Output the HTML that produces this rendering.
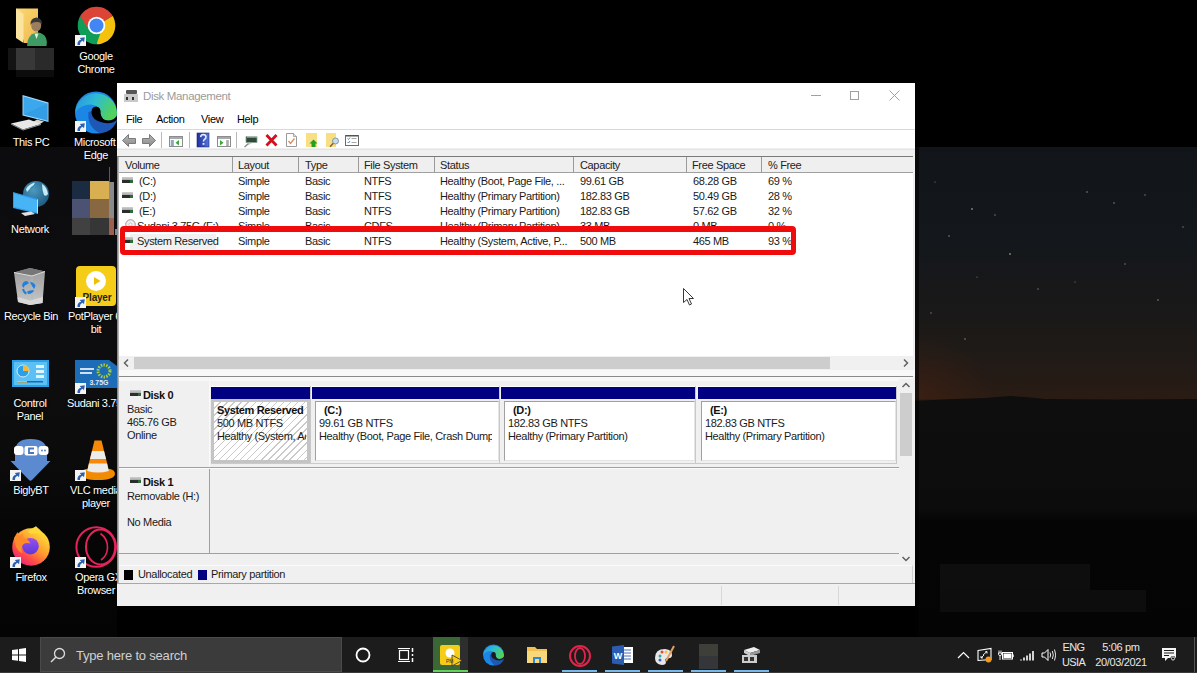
<!DOCTYPE html>
<html><head><meta charset="utf-8">
<style>
*{margin:0;padding:0;box-sizing:border-box}
html,body{width:1197px;height:673px;overflow:hidden;background:#000}
body{position:relative;font-family:"Liberation Sans",sans-serif;font-size:11px;letter-spacing:-0.35px;color:#000}
.a{position:absolute}
.t{position:absolute;white-space:nowrap;line-height:13px}
.lbl{position:absolute;color:#fff;text-align:center;width:70px;line-height:13px;white-space:nowrap;text-shadow:0 0 2px #000}
.sep{position:absolute;width:1px;background:#d0d0d0}
</style></head><body>

<!-- sky wallpaper -->
<!-- wallpaper -->
<div class="a" style="left:0;top:147px;width:117px;height:490px;background:linear-gradient(#0c0c0e 0,#0d0d0e 250px,#0b0a0a 330px,#060606 380px,#040404 490px)"></div>
<div class="a" style="left:915px;top:147px;width:282px;height:490px;background:linear-gradient(#11151a 0px,#14171b 100px,#181819 150px,#1e1a17 200px,#251b15 235px,#2a1c14 252px,#0e0e0e 253px,#0d0d0d 300px,#0c0c0c 362px,#050505 374px,#040404 490px)"></div>
<div class="a" style="left:915px;top:330px;width:80px;height:71px;background:radial-gradient(ellipse at 0% 100%,rgba(80,35,18,0.45),rgba(80,35,18,0) 70%)"></div>
<svg class="a" style="left:915px;top:147px" width="282" height="260" viewBox="0 0 282 260">
 <path d="M0 254L40 252L70 251L95 249L110 250L130 252L200 253L282 252V260H0Z" fill="#0e0e0e"/>
 <g fill="#8a8a70">
 <circle cx="34" cy="89" r="0.8"/><circle cx="57" cy="62" r="0.9"/><circle cx="80" cy="68" r="0.7"/><circle cx="95" cy="107" r="0.9"/><circle cx="172" cy="45" r="0.8"/><circle cx="199" cy="56" r="0.8"/><circle cx="243" cy="153" r="0.8"/><circle cx="230" cy="48" r="0.7"/>
 <circle cx="16" cy="166" r="0.7"/><circle cx="50" cy="192" r="0.8"/><circle cx="123" cy="142" r="0.7"/><circle cx="160" cy="135" r="0.6"/><circle cx="210" cy="117" r="0.7"/><circle cx="268" cy="80" r="0.7"/><circle cx="20" cy="35" r="0.6"/><circle cx="62" cy="130" r="0.6"/>
 </g>
</svg>
<div class="a" style="left:940px;top:564px;width:150px;height:26px;background:#0e0e0e"></div>
<div class="a" style="left:940px;top:590px;width:206px;height:22px;background:#0d0d0d"></div>

<div class="a" style="left:915px;top:147px;width:4px;height:490px;background:rgba(0,0,0,0.55)"></div>

<!-- ===== DESKTOP ICONS ===== -->
<!-- user folder -->
<svg class="a" style="left:10px;top:5px" width="40" height="42" viewBox="0 0 40 42">
  <defs><linearGradient id="fld" x1="0" y1="0" x2="1" y2="1"><stop offset="0" stop-color="#fbd870"/><stop offset="1" stop-color="#f0b850"/></linearGradient></defs>
  <path d="M6 3.5H28V38H14Z" fill="url(#fld)"/>
  <path d="M6 3.5L13.5 9V38L6 33Z" fill="#fbe3a0"/>
  <path d="M17 41Q17 30 26 27.5Q33 27 36 33Q37.5 37 36.5 41Z" fill="#3d9a62"/>
  <path d="M24.5 28.5L26.5 34L28.5 28.5Z" fill="#e8f0e8"/>
  <ellipse cx="26.2" cy="20.5" rx="5" ry="6" fill="#9c7e5e"/>
  <path d="M20.5 20Q20 13 26.5 12.5Q32.5 13 32 20Q31 16.5 26 17Q22 17 20.5 20Z" fill="#383838"/>
</svg>
<div class="a" style="left:8px;top:48px;width:46px;height:22px;background:linear-gradient(90deg,#141414 0,#141414 8px,#383838 8px,#383838 27px,#2a2a2a 27px,#2a2a2a 46px)"></div>
<div class="a" style="left:16px;top:70px;width:38px;height:7px;background:#0c0c0c"></div>
<!-- chrome -->
<svg class="a" style="left:77px;top:6px" width="39" height="39" viewBox="0 0 40 40">
  <path d="M20 20L3.3 10.35A19.3 19.3 0 0 1 36.7 10.35Z" fill="#db4437"/>
  <path d="M20 20L36.7 10.35A19.3 19.3 0 0 1 20 39.3Z" fill="#f4c20d"/>
  <path d="M20 20L20 39.3A19.3 19.3 0 0 1 3.3 10.35Z" fill="#0f9d58"/>
  <path d="M20 11L3.3 10.35L11 23Z" fill="#db4437"/>
  <path d="M27.8 24.5L36.7 10.35L29 16Z" fill="#f4c20d"/>
  <path d="M12.2 24.5L20 39.3L24 28Z" fill="#0f9d58"/>
  <circle cx="20" cy="20" r="9" fill="#fff"/>
  <circle cx="20" cy="20" r="7.2" fill="#4285f4"/>
</svg>
<div class="lbl" style="left:61px;top:50px">Google<br>Chrome</div>
<!-- this pc -->
<svg class="a" style="left:10px;top:94px" width="40" height="38" viewBox="0 0 40 38">
  <path d="M12.5 1L38.5 8.5V28L12.5 21.5Z" fill="#9dd8fb"/>
  <path d="M13.5 2.5L37.5 9.5V26.5L13.5 20.5Z" fill="#3ba8ee"/>
  <path d="M13.5 20.5L37.5 9.5V26.5Z" fill="#2e98e0" opacity="0.6"/>
  <path d="M27 25.5L34 27.5L29 30.5L22 28.5Z" fill="#d8d8d8"/>
  <path d="M1 29.5L19 25.5L31 30L13 35.5Z" fill="#e8e8e8"/>
  <path d="M13 35.5L31 30V31L13 36.5L1 30.5V29.5Z" fill="#9a9a9a"/>
</svg>
<div class="lbl" style="left:-4px;top:136px">This PC</div>
<!-- edge -->
<svg class="a" style="left:75px;top:91px" width="42" height="43" viewBox="0 0 42 43">
  <defs><linearGradient id="eg" x1="0" y1="0" x2="1" y2="0.4"><stop offset="0" stop-color="#2a8fe0"/><stop offset="0.5" stop-color="#2ebcd6"/><stop offset="1" stop-color="#52d15c"/></linearGradient></defs>
  <circle cx="21" cy="21.5" r="21" fill="#1b86e6"/>
  <path d="M13.5 21 Q12 36 25 42.3 Q36 42 41.5 31 L41.8 27.5 Q34 33 27 31.5 Q18 28.5 17 20Z" fill="#1e58b6"/>
  <path d="M0.3 20 A21 21 0 0 1 41.9 21 L41.8 24 Q40.5 29 33 29.5 Q26 29.5 25.5 23 Q24 14 15.5 13.5 Q6 13.5 0.6 21Z" fill="url(#eg)"/>
  <path d="M16.5 22 Q16 15.5 21.5 15.5 Q26 16 25.6 22.5 Q26.5 29 33 29.6 Q38.5 29.5 41.9 25 L41.6 29 Q37 33.5 28 31.8 Q17 29.5 16.5 22Z" fill="#000"/>
</svg>
<div class="lbl" style="left:61px;top:136px;text-align:left;padding-left:13px">Microsoft</div>
<div class="lbl" style="left:61px;top:149px">Edge</div>
<!-- network -->
<svg class="a" style="left:11px;top:178px" width="40" height="40" viewBox="0 0 40 40">
  <defs><radialGradient id="glb" cx="0.4" cy="0.35" r="0.7"><stop offset="0" stop-color="#4a9ac0"/><stop offset="1" stop-color="#1e5a80"/></radialGradient></defs>
  <circle cx="25" cy="16" r="13" fill="url(#glb)"/>
  <path d="M15 11Q18 6 24 4.5Q23 8 20 9Q18 12 16 14Z" fill="#c8ecf5"/>
  <path d="M31 6Q36 9 37 16Q35 19 33 17Q31 12 31 6Z" fill="#c8ecf5"/>
  <path d="M2 14L27 21V36L2 30Z" fill="#2e9ae8"/>
  <path d="M3 15.5L26 22V34.5L3 29Z" fill="#46b4f5"/>
  <path d="M26 22V34.5L27 36V21Z" fill="#cde"/>
  <path d="M10 35L20 33.5L24 36L14 38Z" fill="#e0e0e0"/>
</svg>
<div class="lbl" style="left:-5px;top:223px">Network</div>
<!-- pixelated icon -->
<div class="a" style="left:72px;top:181px;width:18px;height:18px;background:#1b2b42"></div>
<div class="a" style="left:90px;top:181px;width:19px;height:18px;background:#d8b052"></div>
<div class="a" style="left:72px;top:199px;width:18px;height:19px;background:#4b5272"></div>
<div class="a" style="left:90px;top:199px;width:19px;height:19px;background:#876840"></div>
<div class="a" style="left:72px;top:218px;width:18px;height:17px;background:#414141"></div>
<div class="a" style="left:90px;top:218px;width:19px;height:17px;background:#363636"></div>
<div class="a" style="left:109px;top:167px;width:1px;height:15px;background:#5a5a5a"></div>
<div class="a" style="left:109px;top:182px;width:5px;height:36px;background:#8a8a8a"></div>
<div class="a" style="left:115px;top:229px;width:2px;height:6px;background:#888"></div>
<div class="a" style="left:109px;top:218px;width:5px;height:17px;background:#9a6050"></div>
<!-- recycle bin -->
<svg class="a" style="left:13px;top:267px" width="35" height="39" viewBox="0 0 35 39">
  <defs><linearGradient id="rbg" x1="0" y1="0" x2="0" y2="1"><stop offset="0" stop-color="#9a9a9a"/><stop offset="1" stop-color="#c8c8c8"/></linearGradient></defs>
  <path d="M1 5.5L17 1L32 4.5L29.5 36L17 38L5 35Z" fill="url(#rbg)"/>
  <path d="M1 5.5L17 1L32 4.5L19 9Z" fill="#777"/>
  <path d="M1 5.5L19 9L32 4.5" stroke="#dcdcdc" stroke-width="1" fill="none"/>
  <path d="M19 9V38" stroke="#b8b8b8" stroke-width="0.8"/>
  <path d="M4.5 30L17 33.5L30 30L29.5 36L17 38L5 35Z" fill="#d8d8d8"/>
  <path d="M9 19Q9.5 14 14 14L16 16L13 18Q11 18 11 21Z" fill="#1e80e0"/>
  <path d="M17 15Q21 15 22.5 19L21 22L19 19Z" fill="#1e80e0"/>
  <path d="M21 23Q20 27 15 27L14 24.5L17 23.5Z" fill="#1e80e0"/>
  <path d="M10 22Q11 26 13.5 26.5" stroke="#1e80e0" stroke-width="2" fill="none"/>
</svg>
<div class="lbl" style="left:-4px;top:310px">Recycle Bin</div>
<!-- potplayer -->
<svg class="a" style="left:75px;top:265px" width="42" height="42" viewBox="0 0 42 42">
  <rect x="1" y="1" width="40" height="40" rx="4" fill="#f5cc18"/>
  <circle cx="21" cy="16" r="10" fill="#fff"/>
  <path d="M19 12V20L25.5 16Z" fill="#f0c000"/>
  <text x="22" y="36" font-family="Liberation Sans" font-weight="bold" font-size="10" fill="#1e1e1e" text-anchor="middle" letter-spacing="-0.2">Player</text>
</svg>
<div class="lbl" style="left:61px;top:310px;text-align:left;padding-left:7px">PotPlayer 6</div>
<div class="lbl" style="left:61px;top:323px">bit</div>
<!-- control panel -->
<svg class="a" style="left:12px;top:360px" width="37" height="28" viewBox="0 0 37 28">
  <rect x="0" y="0" width="37" height="27" fill="#2ba0e8"/>
  <rect x="2" y="2" width="33" height="23" fill="#5cc0f5"/>
  <circle cx="11" cy="11" r="6" fill="#2ba0e8" stroke="#cdefff" stroke-width="1"/>
  <path d="M11 11V5A6 6 0 0 1 17 11Z" fill="#f5b830"/>
  <rect x="24" y="5" width="8" height="3" fill="#dff4ff"/><rect x="24" y="10" width="8" height="3" fill="#dff4ff"/><rect x="24" y="15" width="8" height="3" fill="#dff4ff"/>
  <rect x="5" y="21" width="26" height="1.5" fill="#1a6ab0"/><rect x="5" y="21" width="10" height="1.5" fill="#f5b830"/>
</svg>
<div class="lbl" style="left:-5px;top:397px">Control<br>Panel</div>
<!-- sudani -->
<svg class="a" style="left:75px;top:360px" width="42" height="28" viewBox="0 0 42 28">
  <path d="M0 0H34L42 6V28H0Z" fill="#1c6cb8"/>
  <circle cx="29" cy="11" r="6" fill="none" stroke="#a8d030" stroke-width="3" stroke-dasharray="1.5 1.2"/>
  <rect x="5" y="8" width="14" height="2" fill="#cfe0f0"/><rect x="5" y="12" width="12" height="2" fill="#cfe0f0"/>
  <text x="24" y="25" font-family="Liberation Sans" font-weight="bold" font-size="7" fill="#e0eaf5" text-anchor="middle" letter-spacing="0">3.75G</text>
</svg>
<div class="lbl" style="left:61px;top:397px;text-align:left;padding-left:6px">Sudani 3.75</div>
<!-- biglybt -->
<svg class="a" style="left:10px;top:438px" width="41" height="44" viewBox="0 0 41 44">
  <path d="M5 14Q5 1 20.5 1Q37 1 37 14V23H40.5L22 42Q20.5 43.5 19 42L0.5 23H5Z" fill="#5b8ad0"/>
  <rect x="4" y="8" width="9.5" height="9" rx="3" fill="#fff"/>
  <rect x="14.5" y="8" width="13" height="9.5" rx="2" fill="#fff"/>
  <rect x="28.5" y="8" width="10" height="9" rx="3" fill="#fff"/>
  <path d="M24 10.5H19V15H24" stroke="#4a78c0" stroke-width="1.8" fill="none"/>
  <circle cx="32" cy="12.5" r="0.9" fill="#4a78c0"/><circle cx="35" cy="12.5" r="0.9" fill="#4a78c0"/>
</svg>
<div class="lbl" style="left:-4px;top:484px">BiglyBT</div>
<!-- vlc -->
<svg class="a" style="left:80px;top:439px" width="36" height="42" viewBox="0 0 36 42">
  <path d="M1 35Q1 31 6 30H30Q35 31 35 35Q34 41 18 41Q2 41 1 35Z" fill="#f08c00"/>
  <path d="M14.5 1.5H21.5L29.5 34Q18 37 6.5 34Z" fill="#f7880a"/>
  <path d="M12 12H24L26 20H10Z" fill="#ececec"/>
  <path d="M9 24.5H27L28.8 32Q18 35 7.2 32Z" fill="#ececec"/>
</svg>
<div class="lbl" style="left:61px;top:484px;text-align:left;padding-left:9px">VLC media</div>
<div class="lbl" style="left:61px;top:497px">player</div>
<!-- firefox -->
<svg class="a" style="left:11px;top:526px" width="40" height="40" viewBox="0 0 40 40">
  <defs>
   <linearGradient id="ffg" x1="0.85" y1="0.1" x2="0.2" y2="0.95"><stop offset="0" stop-color="#ffe23a"/><stop offset="0.45" stop-color="#ff9a2e"/><stop offset="0.75" stop-color="#ff4a4a"/><stop offset="1" stop-color="#e8207e"/></linearGradient>
   <linearGradient id="ffp" x1="0.5" y1="0" x2="0.5" y2="1"><stop offset="0" stop-color="#9a4ef0"/><stop offset="1" stop-color="#5a3ad8"/></linearGradient>
  </defs>
  <circle cx="20" cy="21" r="18.8" fill="url(#ffg)"/>
  <path d="M17 6Q21 2 25 0.3Q30 4 33 9Q28 6 20 8Z" fill="#ffd83a"/>
  <circle cx="19.5" cy="20.2" r="8.3" fill="url(#ffp)"/>
  <path d="M3 12L6.5 6L8 10.5L11.5 7.5L12.5 11.5Q17 12.5 19.5 17.5Q14 16 11.5 19Q9.5 23 11.5 27.5Q6 25 4.5 19Z" fill="#ff8c2a"/>
</svg>
<div class="lbl" style="left:-4px;top:571px">Firefox</div>
<!-- opera gx -->
<svg class="a" style="left:75px;top:526px" width="42" height="42" viewBox="0 0 42 42">
  <circle cx="21.2" cy="21" r="19.8" fill="none" stroke="#e6245c" stroke-width="2"/>
  <ellipse cx="25.6" cy="21" rx="14.6" ry="17.4" fill="none" stroke="#e6245c" stroke-width="2"/>
  <path d="M25.5 7.5Q33 13 32.5 22Q32 30 26 34" fill="none" stroke="#e6245c" stroke-width="1.6"/>
</svg>
<div class="lbl" style="left:61px;top:571px;text-align:left;padding-left:14px">Opera GX</div>
<div class="lbl" style="left:61px;top:584px">Browser</div>
<!-- shortcut overlays -->
<svg class="a" style="left:75px;top:35px" width="11" height="11" viewBox="0 0 11 11"><rect width="11" height="11" fill="#f4f4f4"/><path d="M2.5 10Q2 5.5 6.2 4.8L4.8 3L9.8 2.2L9 7.2L7.6 5.8Q4.8 6.8 5 10Z" fill="#2d5fb0"/></svg>
<svg class="a" style="left:75px;top:121px" width="11" height="11" viewBox="0 0 11 11"><rect width="11" height="11" fill="#f4f4f4"/><path d="M2.5 10Q2 5.5 6.2 4.8L4.8 3L9.8 2.2L9 7.2L7.6 5.8Q4.8 6.8 5 10Z" fill="#2d5fb0"/></svg>
<svg class="a" style="left:75px;top:297px" width="11" height="11" viewBox="0 0 11 11"><rect width="11" height="11" fill="#f4f4f4"/><path d="M2.5 10Q2 5.5 6.2 4.8L4.8 3L9.8 2.2L9 7.2L7.6 5.8Q4.8 6.8 5 10Z" fill="#2d5fb0"/></svg>
<svg class="a" style="left:75px;top:383px" width="11" height="11" viewBox="0 0 11 11"><rect width="11" height="11" fill="#f4f4f4"/><path d="M2.5 10Q2 5.5 6.2 4.8L4.8 3L9.8 2.2L9 7.2L7.6 5.8Q4.8 6.8 5 10Z" fill="#2d5fb0"/></svg>
<svg class="a" style="left:10px;top:470px" width="11" height="11" viewBox="0 0 11 11"><rect width="11" height="11" fill="#f4f4f4"/><path d="M2.5 10Q2 5.5 6.2 4.8L4.8 3L9.8 2.2L9 7.2L7.6 5.8Q4.8 6.8 5 10Z" fill="#2d5fb0"/></svg>
<svg class="a" style="left:75px;top:470px" width="11" height="11" viewBox="0 0 11 11"><rect width="11" height="11" fill="#f4f4f4"/><path d="M2.5 10Q2 5.5 6.2 4.8L4.8 3L9.8 2.2L9 7.2L7.6 5.8Q4.8 6.8 5 10Z" fill="#2d5fb0"/></svg>
<svg class="a" style="left:10px;top:557px" width="11" height="11" viewBox="0 0 11 11"><rect width="11" height="11" fill="#f4f4f4"/><path d="M2.5 10Q2 5.5 6.2 4.8L4.8 3L9.8 2.2L9 7.2L7.6 5.8Q4.8 6.8 5 10Z" fill="#2d5fb0"/></svg>
<svg class="a" style="left:75px;top:557px" width="11" height="11" viewBox="0 0 11 11"><rect width="11" height="11" fill="#f4f4f4"/><path d="M2.5 10Q2 5.5 6.2 4.8L4.8 3L9.8 2.2L9 7.2L7.6 5.8Q4.8 6.8 5 10Z" fill="#2d5fb0"/></svg>

<!-- ===== WINDOW ===== -->
<div class="a" style="left:117px;top:83px;width:798px;height:522px;background:#f0f0f0"></div>
<!-- title + menu + toolbar white -->
<div class="a" style="left:117px;top:83px;width:798px;height:65px;background:#fff"></div>
<svg class="a" style="left:124px;top:89px" width="15" height="14" viewBox="0 0 15 14">
  <rect x="2" y="1" width="11" height="4" rx="1" fill="#555"/>
  <rect x="0" y="5" width="14" height="8" fill="#c9c9c9"/>
  <rect x="2" y="8" width="2" height="3" fill="#333"/><rect x="8" y="8" width="2" height="3" fill="#333"/>
</svg>
<div class="t" style="left:143px;top:90px;color:#9b9b9b;font-size:11.5px">Disk Management</div>
<div class="a" style="left:811px;top:95px;width:10px;height:1px;background:#a0a0a0"></div>
<div class="a" style="left:850px;top:91px;width:9px;height:9px;border:1px solid #a0a0a0"></div>
<svg class="a" style="left:889px;top:90px" width="11" height="11" viewBox="0 0 11 11"><path d="M0.5 0.5L10.5 10.5M10.5 0.5L0.5 10.5" stroke="#a0a0a0" stroke-width="1"/></svg>
<div class="t" style="left:126px;top:113px">File</div>
<div class="t" style="left:156px;top:113px">Action</div>
<div class="t" style="left:201px;top:113px">View</div>
<div class="t" style="left:237px;top:113px">Help</div>
<div class="a" style="left:117px;top:129px;width:798px;height:1px;background:#d9d9d9"></div>
<!-- toolbar band -->
<div class="a" style="left:117px;top:149px;width:798px;height:1px;background:#e4e4e4"></div>
<div class="a" style="left:117px;top:150px;width:798px;height:6px;background:#f0f0f0"></div>
<div class="a" style="left:117px;top:156px;width:796px;height:1px;background:#7a7a7a"></div>
<!-- toolbar icons -->
<svg class="a" style="left:118px;top:130px" width="245" height="19" viewBox="0 0 245 19">
  <defs>
   <linearGradient id="arw" x1="0" y1="0" x2="0" y2="1"><stop offset="0" stop-color="#b8b8b8"/><stop offset="1" stop-color="#8a8a8a"/></linearGradient>
   <linearGradient id="hlp" x1="0" y1="0" x2="1" y2="0"><stop offset="0" stop-color="#1e2f9a"/><stop offset="1" stop-color="#5676d6"/></linearGradient>
  </defs>
  <!-- back -->
  <path d="M4.5 10.5L10.5 4.5V8.5H17.5V13.5H10.5V16.5Z" fill="url(#arw)" stroke="#707070" stroke-width="0.9" stroke-linejoin="round"/>
  <!-- forward -->
  <path d="M37.5 10.5L31.5 4.5V8.5H24.5V13.5H31.5V16.5Z" fill="url(#arw)" stroke="#707070" stroke-width="0.9" stroke-linejoin="round"/>
  <rect x="43" y="2" width="1" height="16" fill="#b8b8b8"/>
  <!-- console tree icon -->
  <rect x="51.5" y="6.5" width="13" height="10" fill="#fff" stroke="#8c8c8c"/>
  <rect x="52" y="7" width="12" height="2" fill="#a8a8b0"/>
  <rect x="53" y="10" width="3" height="6" fill="#a8c4dc"/>
  <path d="M52.5 11H55.5M52.5 13H55.5M52.5 15H55.5" stroke="#5a7a9a" stroke-width="0.7"/>
  <path d="M61 10V15.5L57.5 12.7Z" fill="#3aa83a"/>
  <rect x="71" y="2" width="1" height="16" fill="#b8b8b8"/>
  <!-- help -->
  <rect x="79" y="3" width="12" height="14" fill="url(#hlp)" stroke="#1a2680" stroke-width="0.6"/>
  <path d="M82.6 7.2Q83 4.6 85.4 4.6Q88 4.8 88 7Q88 8.6 86.4 9.5Q85.5 10.1 85.5 11.6" stroke="#e8f0ff" stroke-width="1.5" fill="none"/>
  <rect x="84.6" y="13" width="1.8" height="1.8" fill="#e8f0ff"/>
  <!-- action pane -->
  <rect x="99.5" y="6.5" width="13" height="10" fill="#fff" stroke="#8c8c8c"/>
  <rect x="100" y="7" width="12" height="2" fill="#a8a8b0"/>
  <path d="M102 10V15.5L105.5 12.7Z" fill="#3aa83a"/>
  <rect x="108" y="10" width="3" height="6" fill="#d0d0d0"/>
  <path d="M108.5 11H110.5M108.5 13H110.5M108.5 15H110.5" stroke="#666" stroke-width="0.7"/>
  <rect x="118" y="2" width="1" height="16" fill="#b8b8b8"/>
  <!-- drive connect -->
  <path d="M128 6.5H139V12.5H128Z" fill="#2f4a3a" stroke="#8aa090" stroke-width="0.8"/>
  <path d="M129 7H139" stroke="#c8d8c8" stroke-width="1"/>
  <path d="M131 12.5L134 13.5L130 15Z" fill="#bcd0dc"/>
  <path d="M126.5 17L130.5 13.5" stroke="#8a8a7a" stroke-width="1.4"/>
  <!-- red x -->
  <path d="M148.5 5L158.5 15.5M158.5 5L148.5 15.5" stroke="#d4101c" stroke-width="2.8"/>
  <!-- doc check -->
  <path d="M168.5 3.5H175.5L178.5 6.5V16.5H168.5Z" fill="#fff" stroke="#9a9a9a"/>
  <path d="M175.5 3.5V6.5H178.5" fill="#ddd" stroke="#9a9a9a" stroke-width="0.8"/>
  <path d="M170.5 11L172.5 13.5L176.5 8.5" stroke="#e08a50" stroke-width="1.3" fill="none"/>
  <!-- folder up -->
  <rect x="188" y="3" width="11" height="14" fill="#f9df84"/>
  <path d="M193.5 17V13.5H191.5L195.5 9.5L199.5 13.5H197.5V17Z" fill="#22a022"/>
  <!-- folder search -->
  <rect x="208" y="3" width="10" height="14" fill="#f9df84"/>
  <circle cx="217.5" cy="11" r="3" fill="#c4def0" stroke="#7a90a0" stroke-width="0.9"/>
  <path d="M215.3 13.2L212 16.8" stroke="#8a6030" stroke-width="1.5"/>
  <!-- properties list -->
  <rect x="227.5" y="5.5" width="13" height="10" fill="#fff" stroke="#6a6a6a"/>
  <rect x="228" y="5" width="12" height="1.5" fill="#555"/>
  <path d="M229.5 8.5L230.5 9.5L232 7.5M229.5 12L230.5 13L232 11" stroke="#4a7ab0" stroke-width="0.9" fill="none"/>
  <path d="M233.5 8.5H238.5M233.5 12.5H238.5" stroke="#9a9a9a" stroke-width="0.9"/>
</svg>

<!-- ===== LIST VIEW ===== -->
<div class="a" style="left:118px;top:157px;width:795px;height:15px;background:#efefef"></div>
<div class="a" style="left:118px;top:172px;width:795px;height:1px;background:#a0a0a0"></div>
<div class="a" style="left:118px;top:173px;width:795px;height:183px;background:#fff"></div>
<div class="sep" style="left:232px;top:157px;height:15px;background:#9a9a9a"></div>
<div class="sep" style="left:298px;top:157px;height:15px;background:#9a9a9a"></div>
<div class="sep" style="left:358px;top:157px;height:15px;background:#9a9a9a"></div>
<div class="sep" style="left:434px;top:157px;height:15px;background:#9a9a9a"></div>
<div class="sep" style="left:573px;top:157px;height:15px;background:#9a9a9a"></div>
<div class="sep" style="left:686px;top:157px;height:15px;background:#9a9a9a"></div>
<div class="sep" style="left:761px;top:157px;height:15px;background:#9a9a9a"></div>
<div class="t" style="left:125px;top:159px;color:#222">Volume</div>
<div class="t" style="left:238px;top:159px;color:#222">Layout</div>
<div class="t" style="left:305px;top:159px;color:#222">Type</div>
<div class="t" style="left:364px;top:159px;color:#222">File System</div>
<div class="t" style="left:440px;top:159px;color:#222">Status</div>
<div class="t" style="left:580px;top:159px;color:#222">Capacity</div>
<div class="t" style="left:692px;top:159px;color:#222">Free Space</div>
<div class="t" style="left:768px;top:159px;color:#222">% Free</div>

<div class="a" style="left:122px;top:177px;width:11px;height:3px;background:linear-gradient(#d0d0d0,#a8a8a8)"></div><div class="a" style="left:122px;top:180px;width:11px;height:3px;background:linear-gradient(90deg,#2a2f2c 0,#2a2f2c 8px,#2f6a3a 8px)"></div>
<div class="t" style="left:139px;top:175px;color:#1a1a1a">(C:)</div>
<div class="t" style="left:238px;top:175px;color:#1a1a1a">Simple</div>
<div class="t" style="left:305px;top:175px;color:#1a1a1a">Basic</div>
<div class="t" style="left:364px;top:175px;color:#1a1a1a">NTFS</div>
<div class="t" style="left:440px;top:175px;color:#1a1a1a">Healthy (Boot, Page File, ...</div>
<div class="t" style="left:580px;top:175px;color:#1a1a1a">99.61 GB</div>
<div class="t" style="left:693px;top:175px;color:#1a1a1a">68.28 GB</div>
<div class="t" style="left:768px;top:175px;color:#1a1a1a">69 %</div>
<div class="a" style="left:122px;top:192px;width:11px;height:3px;background:linear-gradient(#d0d0d0,#a8a8a8)"></div><div class="a" style="left:122px;top:195px;width:11px;height:3px;background:linear-gradient(90deg,#2a2f2c 0,#2a2f2c 8px,#2f6a3a 8px)"></div>
<div class="t" style="left:139px;top:190px;color:#1a1a1a">(D:)</div>
<div class="t" style="left:238px;top:190px;color:#1a1a1a">Simple</div>
<div class="t" style="left:305px;top:190px;color:#1a1a1a">Basic</div>
<div class="t" style="left:364px;top:190px;color:#1a1a1a">NTFS</div>
<div class="t" style="left:440px;top:190px;color:#1a1a1a">Healthy (Primary Partition)</div>
<div class="t" style="left:580px;top:190px;color:#1a1a1a">182.83 GB</div>
<div class="t" style="left:693px;top:190px;color:#1a1a1a">50.49 GB</div>
<div class="t" style="left:768px;top:190px;color:#1a1a1a">28 %</div>
<div class="a" style="left:122px;top:207px;width:11px;height:3px;background:linear-gradient(#d0d0d0,#a8a8a8)"></div><div class="a" style="left:122px;top:210px;width:11px;height:3px;background:linear-gradient(90deg,#2a2f2c 0,#2a2f2c 8px,#2f6a3a 8px)"></div>
<div class="t" style="left:139px;top:205px;color:#1a1a1a">(E:)</div>
<div class="t" style="left:238px;top:205px;color:#1a1a1a">Simple</div>
<div class="t" style="left:305px;top:205px;color:#1a1a1a">Basic</div>
<div class="t" style="left:364px;top:205px;color:#1a1a1a">NTFS</div>
<div class="t" style="left:440px;top:205px;color:#1a1a1a">Healthy (Primary Partition)</div>
<div class="t" style="left:580px;top:205px;color:#1a1a1a">182.83 GB</div>
<div class="t" style="left:693px;top:205px;color:#1a1a1a">57.62 GB</div>
<div class="t" style="left:768px;top:205px;color:#1a1a1a">32 %</div>
<svg class="a" style="left:125px;top:219px" width="11" height="11" viewBox="0 0 11 11"><circle cx="5.5" cy="5.5" r="4.8" fill="#eee" stroke="#999"/><circle cx="5.5" cy="5.5" r="1.5" fill="#fff" stroke="#aaa" stroke-width="0.6"/></svg>
<div class="t" style="left:137px;top:220px;color:#1a1a1a">Sudani 3.75G (F:)</div>
<div class="t" style="left:238px;top:220px;color:#1a1a1a">Simple</div>
<div class="t" style="left:305px;top:220px;color:#1a1a1a">Basic</div>
<div class="t" style="left:364px;top:220px;color:#1a1a1a">CDFS</div>
<div class="t" style="left:440px;top:220px;color:#1a1a1a">Healthy (Primary Partition)</div>
<div class="t" style="left:580px;top:220px;color:#1a1a1a">33 MB</div>
<div class="t" style="left:693px;top:220px;color:#1a1a1a">0 MB</div>
<div class="t" style="left:768px;top:220px;color:#1a1a1a">0 %</div>
<div class="a" style="left:130px;top:234px;width:86px;height:15px;background:#f1f1f1"></div>
<div class="a" style="left:122px;top:237px;width:11px;height:3px;background:linear-gradient(#d0d0d0,#a8a8a8)"></div><div class="a" style="left:122px;top:240px;width:11px;height:3px;background:linear-gradient(90deg,#2a2f2c 0,#2a2f2c 8px,#2f6a3a 8px)"></div>
<div class="t" style="left:137px;top:235px;color:#1a1a1a">System Reserved</div>
<div class="t" style="left:238px;top:235px;color:#1a1a1a">Simple</div>
<div class="t" style="left:305px;top:235px;color:#1a1a1a">Basic</div>
<div class="t" style="left:364px;top:235px;color:#1a1a1a">NTFS</div>
<div class="t" style="left:440px;top:235px;color:#1a1a1a">Healthy (System, Active, P...</div>
<div class="t" style="left:580px;top:235px;color:#1a1a1a">500 MB</div>
<div class="t" style="left:693px;top:235px;color:#1a1a1a">465 MB</div>
<div class="t" style="left:768px;top:235px;color:#1a1a1a">93 %</div>
<div class="a" style="left:120px;top:226px;width:676px;height:29px;border:5px solid #f00c0c;border-top-width:6px;border-radius:4px"></div>
<!-- h scrollbar -->
<div class="a" style="left:118px;top:356px;width:795px;height:14px;background:#f0f0f0"></div>
<div class="a" style="left:134px;top:357px;width:696px;height:12px;background:#cdcdcd"></div>
<svg class="a" style="left:122px;top:358px" width="8" height="10" viewBox="0 0 8 10"><path d="M6 1.5L2.5 5L6 8.5" stroke="#606060" stroke-width="1.5" fill="none"/></svg>
<svg class="a" style="left:902px;top:358px" width="8" height="10" viewBox="0 0 8 10"><path d="M2 1.5L5.5 5L2 8.5" stroke="#606060" stroke-width="1.5" fill="none"/></svg>
<!-- splitter -->
<div class="a" style="left:117px;top:370px;width:798px;height:6px;background:#f8f8f8"></div>
<div class="a" style="left:118px;top:376px;width:795px;height:1px;background:#8a8a8a"></div>
<div class="a" style="left:118px;top:377px;width:795px;height:4px;background:#f7f7f7"></div>
<!-- graphical view -->
<div class="a" style="left:118px;top:381px;width:795px;height:184px;background:#f0f0f0"></div>
<!-- v scrollbar -->
<div class="a" style="left:899px;top:379px;width:14px;height:186px;background:#f0f0f0"></div>
<div class="a" style="left:900px;top:393px;width:12px;height:63px;background:#cdcdcd"></div>
<svg class="a" style="left:901px;top:381px" width="10" height="8" viewBox="0 0 10 8"><path d="M1.5 6L5 2.5L8.5 6" stroke="#606060" stroke-width="1.5" fill="none"/></svg>
<svg class="a" style="left:901px;top:555px" width="10" height="8" viewBox="0 0 10 8"><path d="M1.5 2L5 5.5L8.5 2" stroke="#606060" stroke-width="1.5" fill="none"/></svg>

<!-- disk 0 label panel -->
<div class="a" style="left:118px;top:381px;width:92px;height:86px;background:#f0f0f0;border-right:1px solid #fafafa"></div>
<div class="a" style="left:130px;top:390px;width:11px;height:3px;background:linear-gradient(#d0d0d0,#a8a8a8)"></div>
<div class="a" style="left:130px;top:393px;width:11px;height:3px;background:linear-gradient(90deg,#2a2f2c 0,#2a2f2c 8px,#2f6a3a 8px)"></div>
<div class="t" style="left:143px;top:389px;font-weight:bold;color:#111">Disk 0</div>
<div class="t" style="left:127px;top:403px;color:#1a1a1a">Basic</div>
<div class="t" style="left:127px;top:416px;color:#1a1a1a">465.76 GB</div>
<div class="t" style="left:127px;top:429px;color:#1a1a1a">Online</div>

<!-- disk 0 partitions area -->

<!-- partitions -->
<div class="a" style="left:211px;top:386px;width:686px;height:1px;background:#fff"></div>
<div class="a" style="left:211px;top:387px;width:99px;height:12px;background:#000080"></div>
<div class="a" style="left:310px;top:386px;width:1px;height:78px;background:#c8c8c8"></div>
<div class="a" style="left:312px;top:387px;width:187px;height:12px;background:#000080"></div>
<div class="a" style="left:499px;top:386px;width:1px;height:78px;background:#c8c8c8"></div>
<div class="a" style="left:501px;top:387px;width:194px;height:12px;background:#000080"></div>
<div class="a" style="left:695px;top:386px;width:1px;height:78px;background:#c8c8c8"></div>
<div class="a" style="left:698px;top:387px;width:198px;height:12px;background:#000080"></div>
<div class="a" style="left:896px;top:386px;width:1px;height:78px;background:#c8c8c8"></div>
<div class="a" style="left:211px;top:463px;width:686px;height:1px;background:#cacaca"></div>
<div class="a" style="left:211px;top:399px;width:99px;height:64px;background:#c4c4c4"></div>
<div class="a" style="left:214px;top:402px;width:93px;height:58px;background-color:#fff;background-image:repeating-linear-gradient(135deg,#fff 0px,#fff 4px,#cacaca 4px,#cacaca 5px)"></div>
<div class="t" style="left:217px;top:404px;font-weight:bold;color:#111">System Reserved</div>
<div class="t" style="left:217px;top:417px;color:#1a1a1a">500 MB NTFS</div>
<div class="t" style="left:217px;top:430px;color:#1a1a1a;width:89px;overflow:hidden">Healthy (System, Active, Primary</div>
<div class="a" style="left:315px;top:401px;width:184px;height:60px;background:#fff;border-top:1px solid #a0a0a0;border-left:1px solid #a0a0a0;border-right:1px solid #e4e4e4;border-bottom:1px solid #e4e4e4"></div>
<div class="t" style="left:324px;top:404px;font-weight:bold;color:#111">(C:)</div>
<div class="t" style="left:319px;top:417px;color:#1a1a1a">99.61 GB NTFS</div>
<div class="t" style="left:319px;top:430px;color:#1a1a1a;width:173px;overflow:hidden">Healthy (Boot, Page File, Crash Dump, Primary Partition)</div>
<div class="a" style="left:504px;top:401px;width:191px;height:60px;background:#fff;border-top:1px solid #a0a0a0;border-left:1px solid #a0a0a0;border-right:1px solid #e4e4e4;border-bottom:1px solid #e4e4e4"></div>
<div class="t" style="left:513px;top:404px;font-weight:bold;color:#111">(D:)</div>
<div class="t" style="left:508px;top:417px;color:#1a1a1a">182.83 GB NTFS</div>
<div class="t" style="left:508px;top:430px;color:#1a1a1a;width:185px;overflow:hidden">Healthy (Primary Partition)</div>
<div class="a" style="left:701px;top:401px;width:195px;height:60px;background:#fff;border-top:1px solid #a0a0a0;border-left:1px solid #a0a0a0;border-right:1px solid #e4e4e4;border-bottom:1px solid #e4e4e4"></div>
<div class="t" style="left:710px;top:404px;font-weight:bold;color:#111">(E:)</div>
<div class="t" style="left:705px;top:417px;color:#1a1a1a">182.83 GB NTFS</div>
<div class="t" style="left:705px;top:430px;color:#1a1a1a;width:189px;overflow:hidden">Healthy (Primary Partition)</div>
<div class="a" style="left:118px;top:467px;width:781px;height:1px;background:#a0a0a0"></div>
<div class="a" style="left:118px;top:468px;width:781px;height:1px;background:#fafafa"></div>
<!-- disk 1 -->
<div class="a" style="left:118px;top:469px;width:92px;height:85px;background:#f0f0f0;border-right:1px solid #a0a0a0;border-bottom:1px solid #a0a0a0"></div>
<div class="a" style="left:130px;top:477px;width:11px;height:3px;background:linear-gradient(#d0d0d0,#a8a8a8)"></div>
<div class="a" style="left:130px;top:480px;width:11px;height:3px;background:linear-gradient(90deg,#2a2f2c 0,#2a2f2c 8px,#2f6a3a 8px)"></div>
<div class="t" style="left:143px;top:476px;font-weight:bold;color:#111">Disk 1</div>
<div class="t" style="left:127px;top:490px;color:#1a1a1a">Removable (H:)</div>
<div class="t" style="left:127px;top:516px;color:#1a1a1a">No Media</div>
<div class="a" style="left:210px;top:469px;width:689px;height:85px;background:#f0f0f0;border-bottom:1px solid #a0a0a0"></div>

<!-- legend -->
<div class="a" style="left:118px;top:565px;width:795px;height:18px;background:#f0f0f0;border-top:1px solid #fafafa;border-right:1px solid #d0d0d0"></div>
<div class="a" style="left:124px;top:570px;width:9px;height:10px;background:#000"></div>
<div class="t" style="left:138px;top:568px;color:#1a1a1a">Unallocated</div>
<div class="a" style="left:198px;top:570px;width:9px;height:10px;background:#000080"></div>
<div class="t" style="left:211px;top:568px;color:#1a1a1a">Primary partition</div>
<!-- status bar -->
<div class="a" style="left:117px;top:583px;width:798px;height:1px;background:#a8a8a8"></div>
<div class="a" style="left:117px;top:584px;width:798px;height:22px;background:#f0f0f0"></div>
<div class="a" style="left:721px;top:586px;width:1px;height:19px;background:#d8d8d8"></div>
<div class="a" style="left:838px;top:586px;width:1px;height:19px;background:#d8d8d8"></div>

<div class="a" style="left:117px;top:156px;width:1px;height:427px;background:#8a8a8a"></div>
<div class="a" style="left:118px;top:157px;width:1px;height:426px;background:#b4b4b4"></div>

<!-- ===== TASKBAR ===== -->
<div class="a" style="left:0;top:637px;width:1197px;height:36px;background:#1c1c1c"></div>
<div class="a" style="left:0;top:672px;width:1197px;height:1px;background:#3a3a3a"></div>
<svg class="a" style="left:12px;top:648px" width="14" height="14" viewBox="0 0 14 14"><path d="M0 2L6 1.2V6.6H0ZM7 1L14 0V6.6H7ZM0 7.4H6V12.8L0 12ZM7 7.4H14V14L7 13Z" fill="#fff"/></svg>
<div class="a" style="left:40px;top:637px;width:302px;height:35px;background:#3b3b3b;border:1px solid #4a4a4a"></div>
<svg class="a" style="left:50px;top:647px" width="16" height="16" viewBox="0 0 16 16"><circle cx="9.5" cy="6.5" r="5" fill="none" stroke="#ddd" stroke-width="1.3"/><path d="M6 10L1 15" stroke="#ddd" stroke-width="1.5"/></svg>
<div class="t" style="left:76px;top:648px;color:#d0d0d0;font-size:13px;letter-spacing:-0.2px;line-height:16px">Type here to search</div>
<!-- cortana -->
<svg class="a" style="left:355px;top:647px" width="16" height="16" viewBox="0 0 16 16"><circle cx="8" cy="8" r="6.5" fill="none" stroke="#fff" stroke-width="1.8"/></svg>
<!-- task view -->
<svg class="a" style="left:397px;top:647px" width="18" height="16" viewBox="0 0 18 16"><rect x="2.5" y="3.5" width="9" height="9" fill="none" stroke="#fff" stroke-width="1.2"/><path d="M1 1.5H13M1 14.5H13" stroke="#fff" stroke-width="1.2"/><path d="M15.5 1V5M15.5 7V9M15.5 11V15" stroke="#fff" stroke-width="1.5"/></svg>
<!-- potplayer active -->
<div class="a" style="left:433px;top:637px;width:27px;height:35px;background:#3b6636"></div>
<div class="a" style="left:460px;top:637px;width:8px;height:35px;background:#2e2e2e"></div>
<div class="a" style="left:433px;top:670px;width:35px;height:2px;background:#5fd35a"></div>
<svg class="a" style="left:440px;top:645px" width="24" height="22" viewBox="0 0 24 22"><rect x="0" y="0" width="20" height="20" rx="2" fill="#f5cc18"/><circle cx="10" cy="8" r="4.5" fill="#fff"/><path d="M12 10V21L22 15.5Z" fill="#f5cc18" stroke="#333" stroke-width="0.8"/><text x="6" y="18" font-family="Liberation Sans" font-size="5" fill="#333" letter-spacing="0">PM</text></svg>
<!-- edge -->
<svg class="a" style="left:483px;top:644px" width="21" height="22" viewBox="0 0 42 43">
  <defs><linearGradient id="eg2" x1="0" y1="0" x2="1" y2="0.4"><stop offset="0" stop-color="#2a8fe0"/><stop offset="0.5" stop-color="#2ebcd6"/><stop offset="1" stop-color="#52d15c"/></linearGradient></defs>
  <circle cx="21" cy="21.5" r="21" fill="#1b86e6"/>
  <path d="M13.5 21 Q12 36 25 42.3 Q36 42 41.5 31 L41.8 27.5 Q34 33 27 31.5 Q18 28.5 17 20Z" fill="#1e58b6"/>
  <path d="M0.3 20 A21 21 0 0 1 41.9 21 L41.8 24 Q40.5 29 33 29.5 Q26 29.5 25.5 23 Q24 14 15.5 13.5 Q6 13.5 0.6 21Z" fill="url(#eg2)"/>
  <path d="M16.5 22 Q16 15.5 21.5 15.5 Q26 16 25.6 22.5 Q26.5 29 33 29.6 Q38.5 29.5 41.9 25 L41.6 29 Q37 33.5 28 31.8 Q17 29.5 16.5 22Z" fill="#1c1c1c"/>
</svg>
<!-- explorer -->
<svg class="a" style="left:527px;top:646px" width="20" height="18" viewBox="0 0 20 18"><path d="M0 1H8L10 3H20V17H0Z" fill="#f0c050"/><rect x="0" y="5" width="20" height="12" fill="#f8d878"/><path d="M6 17V11H14V17H12V13H8V17Z" fill="#2a8ad8"/></svg>
<!-- opera -->
<svg class="a" style="left:569px;top:645px" width="22" height="22" viewBox="0 0 22 22"><ellipse cx="11" cy="11" rx="10" ry="10" fill="none" stroke="#e0244a" stroke-width="2"/><ellipse cx="11" cy="11" rx="5" ry="8" fill="none" stroke="#e0244a" stroke-width="1.8"/></svg>
<!-- word -->
<svg class="a" style="left:612px;top:645px" width="22" height="20" viewBox="0 0 22 20"><rect x="8" y="2" width="13" height="16" fill="#fff"/><path d="M10 5H19M10 8H19M10 11H19M10 14H19" stroke="#4a70b8" stroke-width="1"/><path d="M0 1.5L12 0V20L0 18.5Z" fill="#2b5cb0"/><text x="6" y="13.5" font-family="Liberation Sans" font-weight="bold" font-size="9" fill="#fff" text-anchor="middle" letter-spacing="0">W</text></svg>
<!-- paint -->
<svg class="a" style="left:654px;top:645px" width="22" height="22" viewBox="0 0 22 22"><path d="M1 13Q1 4 11 4Q19 5 18 11Q17 14 13 13Q10 14 12 17Q12 20 8 20Q1 19 1 13Z" fill="#e8e8e8"/><circle cx="6" cy="11" r="1.5" fill="#3a9"/><circle cx="8" cy="7" r="1.5" fill="#e44"/><circle cx="12" cy="7" r="1.5" fill="#fb3"/><circle cx="6" cy="15" r="1.5" fill="#36c"/><path d="M20 1L12 16" stroke="#e0a060" stroke-width="2"/></svg>
<!-- blurred -->
<div class="a" style="left:699px;top:644px;width:19px;height:12px;background:#3e3f38"></div>
<div class="a" style="left:699px;top:656px;width:19px;height:13px;background:#35363a"></div>
<!-- disk mgmt -->
<svg class="a" style="left:741px;top:646px" width="20" height="18" viewBox="0 0 20 18"><path d="M3 4L13 1L19 4L9 7Z" fill="#eee"/><path d="M3 4L9 7V10L3 7Z" fill="#ccc"/><path d="M9 7L19 4V7L9 10Z" fill="#999"/><rect x="1" y="9" width="15" height="8" fill="#ccc"/><rect x="3" y="11" width="4" height="4" fill="#333"/><rect x="9" y="11" width="4" height="4" fill="#333"/></svg>
<!-- underlines -->
<div class="a" style="left:562px;top:670px;width:35px;height:2px;background:#76b9ed"></div>
<div class="a" style="left:605px;top:670px;width:35px;height:2px;background:#76b9ed"></div>
<div class="a" style="left:648px;top:670px;width:35px;height:2px;background:#76b9ed"></div>
<div class="a" style="left:691px;top:670px;width:35px;height:2px;background:#76b9ed"></div>
<div class="a" style="left:734px;top:670px;width:35px;height:2px;background:#76b9ed"></div>
<!-- tray -->
<svg class="a" style="left:957px;top:651px" width="13" height="8" viewBox="0 0 13 8"><path d="M1 7L6.5 1.5L12 7" stroke="#fff" stroke-width="1.2" fill="none"/></svg>
<svg class="a" style="left:976px;top:647px" width="17" height="16" viewBox="0 0 17 16"><path d="M2 3.5L15 1.5V12.5L2 13.5Z" fill="none" stroke="#fff" stroke-width="1.1"/><path d="M9 5L11 4.5V6.5M11 4.5L7 8M5 11L5 9M5 11L7 10.8M5 11L8 8" stroke="#fff" stroke-width="0.9" fill="none"/><circle cx="12.5" cy="12.5" r="3" fill="#f59a1a"/></svg>
<svg class="a" style="left:998px;top:650px" width="16" height="11" viewBox="0 0 16 11"><rect x="4.5" y="2.5" width="10" height="6.5" fill="none" stroke="#fff" stroke-width="1"/><rect x="5.5" y="3.5" width="8" height="4.5" fill="#fff"/><rect x="14.5" y="4.5" width="1.2" height="2.5" fill="#fff"/><path d="M1 0.5V3M3 0.5V3M0.5 3H3.5V4.5Q3.5 5.5 2 5.5Q0.5 5.5 0.5 4.5ZM2 5.5V10" stroke="#fff" stroke-width="0.9" fill="none"/></svg>
<svg class="a" style="left:1020px;top:650px" width="14" height="11" viewBox="0 0 14 11"><path d="M1 10.5V9.5M4 10.5V7.5M7 10.5V5.5M10 10.5V3.5M13 10.5V1" stroke="#fff" stroke-width="1.6"/></svg>
<svg class="a" style="left:1041px;top:648px" width="15" height="14" viewBox="0 0 15 14"><path d="M1 5H3.5L7 1.5V12.5L3.5 9H1Z" fill="none" stroke="#fff" stroke-width="1"/><path d="M9 4.5Q10.3 7 9 9.5M11.3 3Q13.3 7 11.3 11M13.5 1.5Q16 7 13.5 12.5" stroke="#fff" stroke-width="0.9" fill="none"/></svg>
<div class="t" style="left:1062px;top:640px;color:#e8e8e8;width:23px;text-align:center;line-height:15px;letter-spacing:-0.6px">ENG<br>USIA</div>
<div class="t" style="left:1090px;top:640px;color:#e8e8e8;width:62px;text-align:center;line-height:15px">5:06 pm<br>20/03/2021</div>
<svg class="a" style="left:1162px;top:648px" width="15" height="14" viewBox="0 0 15 14"><path d="M0 0H14V10H6L3 13V10H0Z" fill="#f4f4f4"/><path d="M2 2.5H12M2 5H12M2 7.5H7" stroke="#1c1c1c" stroke-width="1"/><circle cx="11" cy="10.5" r="2.6" fill="#1c1c1c"/><circle cx="11" cy="10.5" r="1.6" fill="none" stroke="#eee" stroke-width="0.9"/></svg>
<div class="a" style="left:1194px;top:637px;width:1px;height:35px;background:#555"></div>

<!-- mouse cursor -->
<svg class="a" style="left:683px;top:288px" width="12" height="18" viewBox="0 0 12 18"><path d="M0.5 0.5V14.5L4 11.5L6.5 17L8.5 16L6 10.5H10.5Z" fill="#fff" stroke="#222" stroke-width="0.9"/></svg>

</body></html>
